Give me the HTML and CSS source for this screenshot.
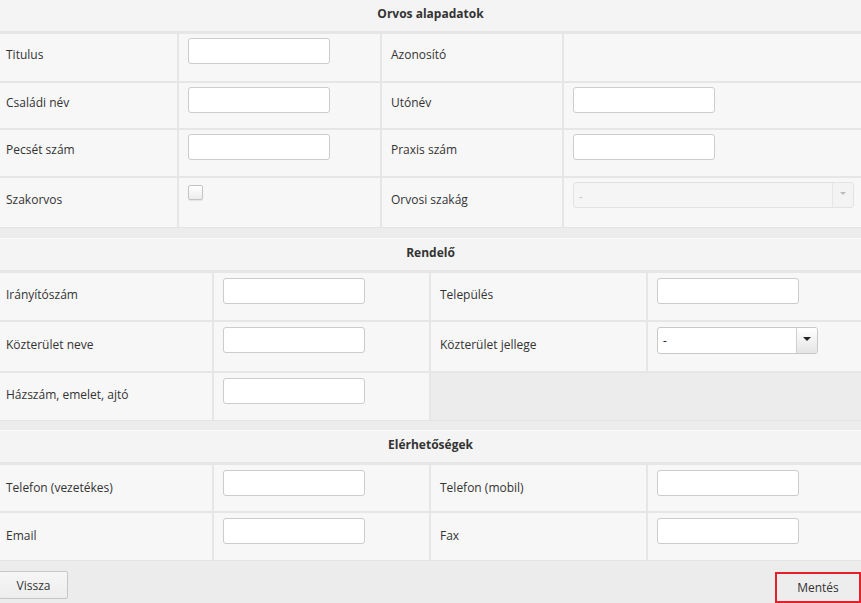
FILE: index.html
```html
<!DOCTYPE html>
<html lang="hu">
<head>
<meta charset="utf-8">
<title>Orvos alapadatok</title>
<link rel="stylesheet" href="styles.css">
</head>
<body>
<div class="page">
  <section class="section sec-1">
    <div class="sec-head first">Orvos alapadatok</div>
    <div class="grid grid-a">
      <div class="cell label first-col">Titulus</div>
      <div class="cell field"><input class="inp" type="text"></div>
      <div class="cell label">Azonosító</div>
      <div class="cell field"></div>

      <div class="cell label first-col">Családi név</div>
      <div class="cell field"><input class="inp" type="text"></div>
      <div class="cell label">Utónév</div>
      <div class="cell field"><input class="inp" type="text"></div>

      <div class="cell label first-col">Pecsét szám</div>
      <div class="cell field"><input class="inp" type="text"></div>
      <div class="cell label">Praxis szám</div>
      <div class="cell field"><input class="inp" type="text"></div>

      <div class="cell label first-col">Szakorvos</div>
      <div class="cell field check-cell"><span class="checkbox"></span></div>
      <div class="cell label">Orvosi szakág</div>
      <div class="cell field">
        <div class="select disabled wide">
          <span class="sel-val">-</span>
          <span class="sel-btn"><span class="tri"></span></span>
        </div>
      </div>
    </div>
  </section>

  <section class="section sec-2">
    <div class="sec-head">Rendelő</div>
    <div class="grid grid-b rows-3">
      <div class="cell label first-col">Irányítószám</div>
      <div class="cell field"><input class="inp" type="text"></div>
      <div class="cell label">Település</div>
      <div class="cell field"><input class="inp" type="text"></div>

      <div class="cell label first-col">Közterület neve</div>
      <div class="cell field"><input class="inp" type="text"></div>
      <div class="cell label">Közterület jellege</div>
      <div class="cell field">
        <div class="select">
          <span class="sel-val">-</span>
          <span class="sel-btn"><span class="tri"></span></span>
        </div>
      </div>

      <div class="cell label first-col">Házszám, emelet, ajtó</div>
      <div class="cell field"><input class="inp" type="text"></div>
      <div class="empty"></div>
    </div>
  </section>

  <section class="section sec-3">
    <div class="sec-head">Elérhetőségek</div>
    <div class="grid grid-b rows-2">
      <div class="cell label first-col">Telefon (vezetékes)</div>
      <div class="cell field"><input class="inp" type="text"></div>
      <div class="cell label">Telefon (mobil)</div>
      <div class="cell field"><input class="inp" type="text"></div>

      <div class="cell label first-col">Email</div>
      <div class="cell field"><input class="inp" type="text"></div>
      <div class="cell label">Fax</div>
      <div class="cell field"><input class="inp" type="text"></div>
    </div>
  </section>

  <div class="footer">
    <button class="btn back" type="button">Vissza</button>
    <button class="btn save" type="button">Mentés</button>
  </div>
</div>
</body>
</html>
```

FILE: styles.css
```css
html, body {
  margin: 0;
  padding: 0;
}
body {
  background: #ececec;
  font-family: "Open Sans", "Liberation Sans", sans-serif;
  font-size: 12px;
  color: #333;
  width: 861px;
  height: 603px;
  overflow: hidden;
}
.page {
  display: flex;
  flex-direction: column;
}
.section {
  display: flex;
  flex-direction: column;
}
.sec-1 {
  margin-bottom: 10px;
}
.sec-2 {
  margin-bottom: 9px;
}
.sec-head {
  height: 32px;
  padding-bottom: 4px;
  background: #f4f4f4;
  border-top: 1px solid #f9f9f9;
  box-sizing: border-box;
  display: flex;
  align-items: center;
  justify-content: center;
  font-weight: 700;
  color: #333;
}
.sec-head.first {
  height: 31px;
  padding-bottom: 5px;
  border-top: none;
}
.grid {
  display: grid;
  gap: 2px;
  background: #e6e6e6;
  border-top: 3px solid #e6e6e6;
  border-bottom: 1px solid #e4e4e4;
}
.grid-a {
  grid-template-columns: 177px 201px 180px 1fr;
  grid-template-rows: 47px 45px 46px 49px;
}
.grid-b {
  grid-template-columns: 212px 215px 215px 1fr;
}
.rows-3 {
  grid-template-rows: 47px 49px 47px;
}
.rows-2 {
  grid-template-rows: 46px 47px;
}
.cell {
  background: #f7f7f7;
  box-sizing: border-box;
}
.label {
  display: flex;
  align-items: center;
  padding: 0 0 2px 9px;
}
.rows-3 .label {
  padding-bottom: 4px;
}
.grid-a .label {
  padding-bottom: 7px;
}
.label.first-col {
  padding-left: 6px;
}
.field {
  padding: 4px 0 0 9px;
}
.grid-b .field {
  padding-top: 5px;
}
.check-cell {
  padding-top: 7px;
}
.empty {
  grid-column: span 2;
  background: #ececec;
}
.inp {
  display: block;
  width: 142px;
  height: 26px;
  box-sizing: border-box;
  border: 1px solid #cccccc;
  border-radius: 3px;
  background: #fff;
  margin: 0;
  padding: 0 6px;
  font: inherit;
}
.checkbox {
  display: block;
  width: 15px;
  height: 15px;
  box-sizing: border-box;
  border: 1px solid #c4c4c4;
  border-radius: 2px;
  background: linear-gradient(#ffffff, #ececec);
  box-shadow: 0 1px 1px rgba(0,0,0,0.08);
}
.select {
  display: flex;
  width: 161px;
  height: 27px;
  box-sizing: border-box;
  border: 1px solid #c8c8c8;
  border-radius: 3px;
  background: #fff;
  overflow: hidden;
}
.sel-val {
  flex: 1;
  padding-left: 5px;
  line-height: 25px;
  color: #222;
}
.sel-btn {
  width: 21px;
  border-left: 1px solid #cfcfcf;
  background: linear-gradient(#ffffff, #e4e4e4);
  display: flex;
  justify-content: center;
  padding-top: 9px;
  box-sizing: border-box;
}
.tri {
  width: 0;
  height: 0;
  border-left: 4px solid transparent;
  border-right: 4px solid transparent;
  border-top: 4px solid #222;
}
.select.wide {
  width: 281px;
  height: 26px;
}
.select.disabled {
  background: #f5f5f5;
  border-color: #e2e2e2;
}
.select.disabled .sel-val {
  color: #bdbdbd;
  font-size: 11px;
}
.select.disabled .sel-btn {
  background: #f3f3f3;
  border-left-color: #e6e6e6;
}
.select.disabled .tri {
  border-top-color: #bbb;
  border-left-width: 3px;
  border-right-width: 3px;
  border-top-width: 3px;
}
.footer {
  display: flex;
  justify-content: space-between;
  align-items: flex-start;
  padding-top: 10px;
}
.btn {
  font: inherit;
  color: #333;
  background: linear-gradient(#f6f6f6, #ededed);
  border: 1px solid #c6c6c6;
  border-radius: 2px;
  margin: 0;
  cursor: pointer;
}
.back {
  width: 69px;
  height: 28px;
  margin-left: -1px;
}
.save {
  width: 86px;
  height: 31px;
  border: 2px solid #e3202b;
  border-radius: 0;
  margin-top: 1px;
  background: #ededed;
}
```
